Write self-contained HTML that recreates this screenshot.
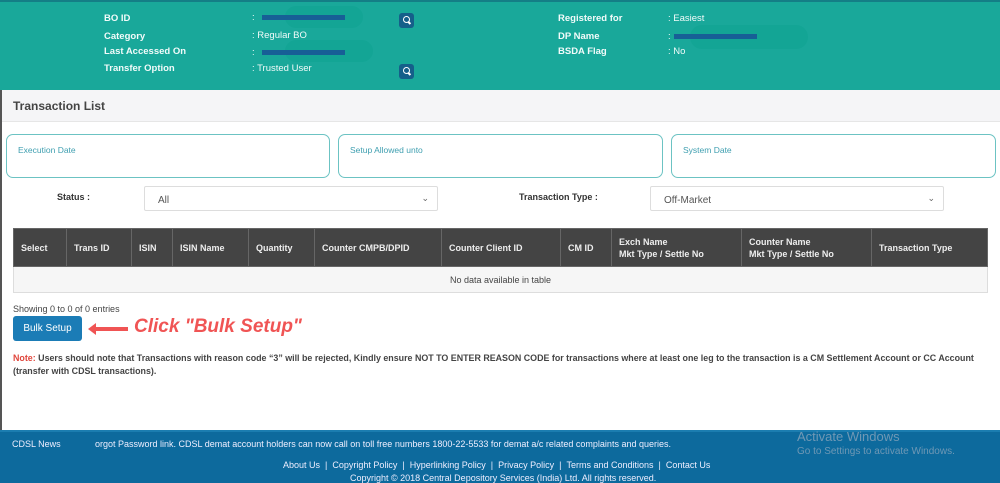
<!DOCTYPE html>
<html><head><meta charset="utf-8"><style>
*{margin:0;padding:0;box-sizing:border-box}
body{width:1000px;height:483px;overflow:hidden;background:#fff;font-family:"Liberation Sans",Arial,sans-serif;position:relative;color:#333}
.a{position:absolute;white-space:nowrap}
.hdr{left:0;top:0;width:1000px;height:90px;background:#19a89a;border-top:2px solid #147e86}
.hl{color:#f2fbfa;font-size:9.5px;font-weight:bold}
.hv{color:#f2fbfa;font-size:9.5px}
.bar{background:#175f96;height:5px}
.blob{background:#13a595;border-radius:12px}
.srch{width:15px;height:15px;background:#155f8a;border-radius:3px}
.srch:after{content:"";position:absolute;left:4px;top:3px;width:5px;height:5px;border:1.6px solid #fff;border-radius:50%}
.srch:before{content:"";position:absolute;left:9px;top:9px;width:3px;height:1.6px;background:#fff;transform:rotate(45deg)}
.box{border:1.3px solid #6cc3c3;border-radius:7px;height:44px;top:134px}
.box span{position:absolute;left:11px;top:10px;font-size:8.5px;color:#3f9fb0}
.sel{border:1px solid #ddd;border-radius:2px;height:25px;top:186px;font-size:10px;color:#555;padding:8px 0 0 13px}
.sel i{position:absolute;right:8px;top:6px;font-style:normal;font-size:9px;color:#666}
table{border-collapse:collapse;position:absolute;left:13px;top:228px;width:975px}
th{background:#444;color:#eee;font-size:9px;text-align:left;padding:0 7px;height:38px;border:1px solid #666;font-weight:bold;line-height:12px}
td{height:26px;background:#f6f6f6;border:1px solid #ddd;font-size:9px;text-align:center;color:#444}
.ftr{left:0;top:430px;width:1000px;height:53px;background:#0d6a9d;border-top:2px solid #1b7db0}
.fw{color:#eef;font-size:9px}
</style></head><body>
<div class="a" style="left:0;top:0;width:2px;height:430px;background:#555"></div>
<div class="a hdr"></div>
<div class="a hl" style="left:104px;top:13px">BO ID</div>
<div class="a hl" style="left:104px;top:31px">Category</div>
<div class="a hl" style="left:104px;top:46px">Last Accessed On</div>
<div class="a hl" style="left:104px;top:63px">Transfer Option</div>
<div class="a blob" style="left:285px;top:6px;width:78px;height:22px"></div>
<div class="a blob" style="left:285px;top:40px;width:88px;height:22px"></div>
<div class="a hv" style="left:252px;top:12px">:</div>
<div class="a bar" style="left:262px;top:15px;width:83px"></div>
<div class="a hv" style="left:252px;top:30px">: Regular BO</div>
<div class="a hv" style="left:252px;top:47px">:</div>
<div class="a bar" style="left:262px;top:50px;width:83px"></div>
<div class="a hv" style="left:252px;top:63px">: Trusted User</div>
<div class="a srch" style="left:399px;top:13px"></div>
<div class="a srch" style="left:399px;top:64px"></div>
<div class="a hl" style="left:558px;top:13px">Registered for</div>
<div class="a hl" style="left:558px;top:31px">DP Name</div>
<div class="a hl" style="left:558px;top:46px">BSDA Flag</div>
<div class="a blob" style="left:690px;top:25px;width:118px;height:24px"></div>
<div class="a hv" style="left:668px;top:13px">: Easiest</div>
<div class="a hv" style="left:668px;top:31px">:</div>
<div class="a bar" style="left:674px;top:34px;width:83px"></div>
<div class="a hv" style="left:668px;top:46px">: No</div>
<div class="a" style="left:2px;top:90px;width:998px;height:32px;background:#f5f5f7;border-bottom:1px solid #e6e6e6"></div>
<div class="a" style="left:13px;top:99px;font-size:12px;font-weight:bold;color:#444">Transaction List</div>
<div class="a box" style="left:6px;width:324px"><span>Execution Date</span></div>
<div class="a box" style="left:338px;width:325px"><span>Setup Allowed unto</span></div>
<div class="a box" style="left:671px;width:325px"><span>System Date</span></div>
<div class="a" style="left:57px;top:192px;font-size:9px;font-weight:bold;color:#333">Status :</div>
<div class="a sel" style="left:144px;width:294px">All<i>&#8964;</i></div>
<div class="a" style="left:519px;top:192px;font-size:9px;font-weight:bold;color:#333">Transaction Type :</div>
<div class="a sel" style="left:650px;width:294px">Off-Market<i>&#8964;</i></div>
<table><tr>
<th style="width:53px">Select</th><th style="width:65px">Trans ID</th><th style="width:41px">ISIN</th><th style="width:76px">ISIN Name</th><th style="width:66px">Quantity</th><th style="width:127px">Counter CMPB/DPID</th><th style="width:119px">Counter Client ID</th><th style="width:51px">CM ID</th><th style="width:130px">Exch Name<br>Mkt Type / Settle No</th><th style="width:130px">Counter Name<br>Mkt Type / Settle No</th><th>Transaction Type</th>
</tr><tr><td colspan="11">No data available in table</td></tr></table>
<div class="a" style="left:13px;top:304px;font-size:9px;color:#444">Showing 0 to 0 of 0 entries</div>
<div class="a" style="left:13px;top:316px;width:69px;height:25px;background:#1b7cb6;border-radius:3px;color:#fff;font-size:10px;text-align:center;line-height:25px">Bulk Setup</div>
<svg class="a" style="left:88px;top:322px" width="42" height="14"><path d="M0 7 L8 1 L8 5 L40 5 L40 9 L8 9 L8 13 Z" fill="#f05454"/></svg>
<div class="a" style="left:134px;top:316px;font-size:19px;font-weight:bold;font-style:italic;color:#f05454">Click "Bulk Setup"</div>
<div class="a" style="left:13px;top:352px;font-size:8.9px;font-weight:bold;color:#444;line-height:13px"><span style="color:#e0463c">Note:</span> Users should note that Transactions with reason code “3” will be rejected, Kindly ensure NOT TO ENTER REASON CODE for transactions where at least one leg to the transaction is a CM Settlement Account or CC Account<br>(transfer with CDSL transactions).</div>
<div class="a ftr"></div>
<div class="a fw" style="left:12px;top:439px">CDSL News</div>
<div class="a fw" style="left:95px;top:439px">orgot Password link. CDSL demat account holders can now call on toll free numbers 1800-22-5533 for demat a/c related complaints and queries.</div>
<div class="a fw" style="left:283px;top:460px">About Us &nbsp;| &nbsp;Copyright Policy &nbsp;| &nbsp;Hyperlinking Policy &nbsp;| &nbsp;Privacy Policy &nbsp;| &nbsp;Terms and Conditions &nbsp;| &nbsp;Contact Us</div>
<div class="a fw" style="left:350px;top:473px">Copyright © 2018 Central Depository Services (India) Ltd. All rights reserved.</div>
<div class="a" style="left:797px;top:429px;font-size:13px;color:#6f98b5">Activate Windows</div>
<div class="a" style="left:797px;top:446px;font-size:10px;color:#6f98b5">Go to Settings to activate Windows.</div>
</body></html>
